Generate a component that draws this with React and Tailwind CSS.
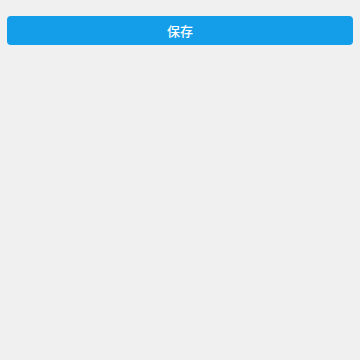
export default function App() {
  return (
    <div
      className="min-h-screen w-full bg-[#f0f0f0] px-[7px] pt-[16px]"
      style={{ fontFamily: '"Noto Sans CJK SC", "Noto Sans", sans-serif' }}
    >
      <button className="flex h-[29px] w-full items-center justify-center rounded-[4px] bg-[#149de8] text-[13px] font-medium text-white">
        保存
      </button>
    </div>
  );
}
